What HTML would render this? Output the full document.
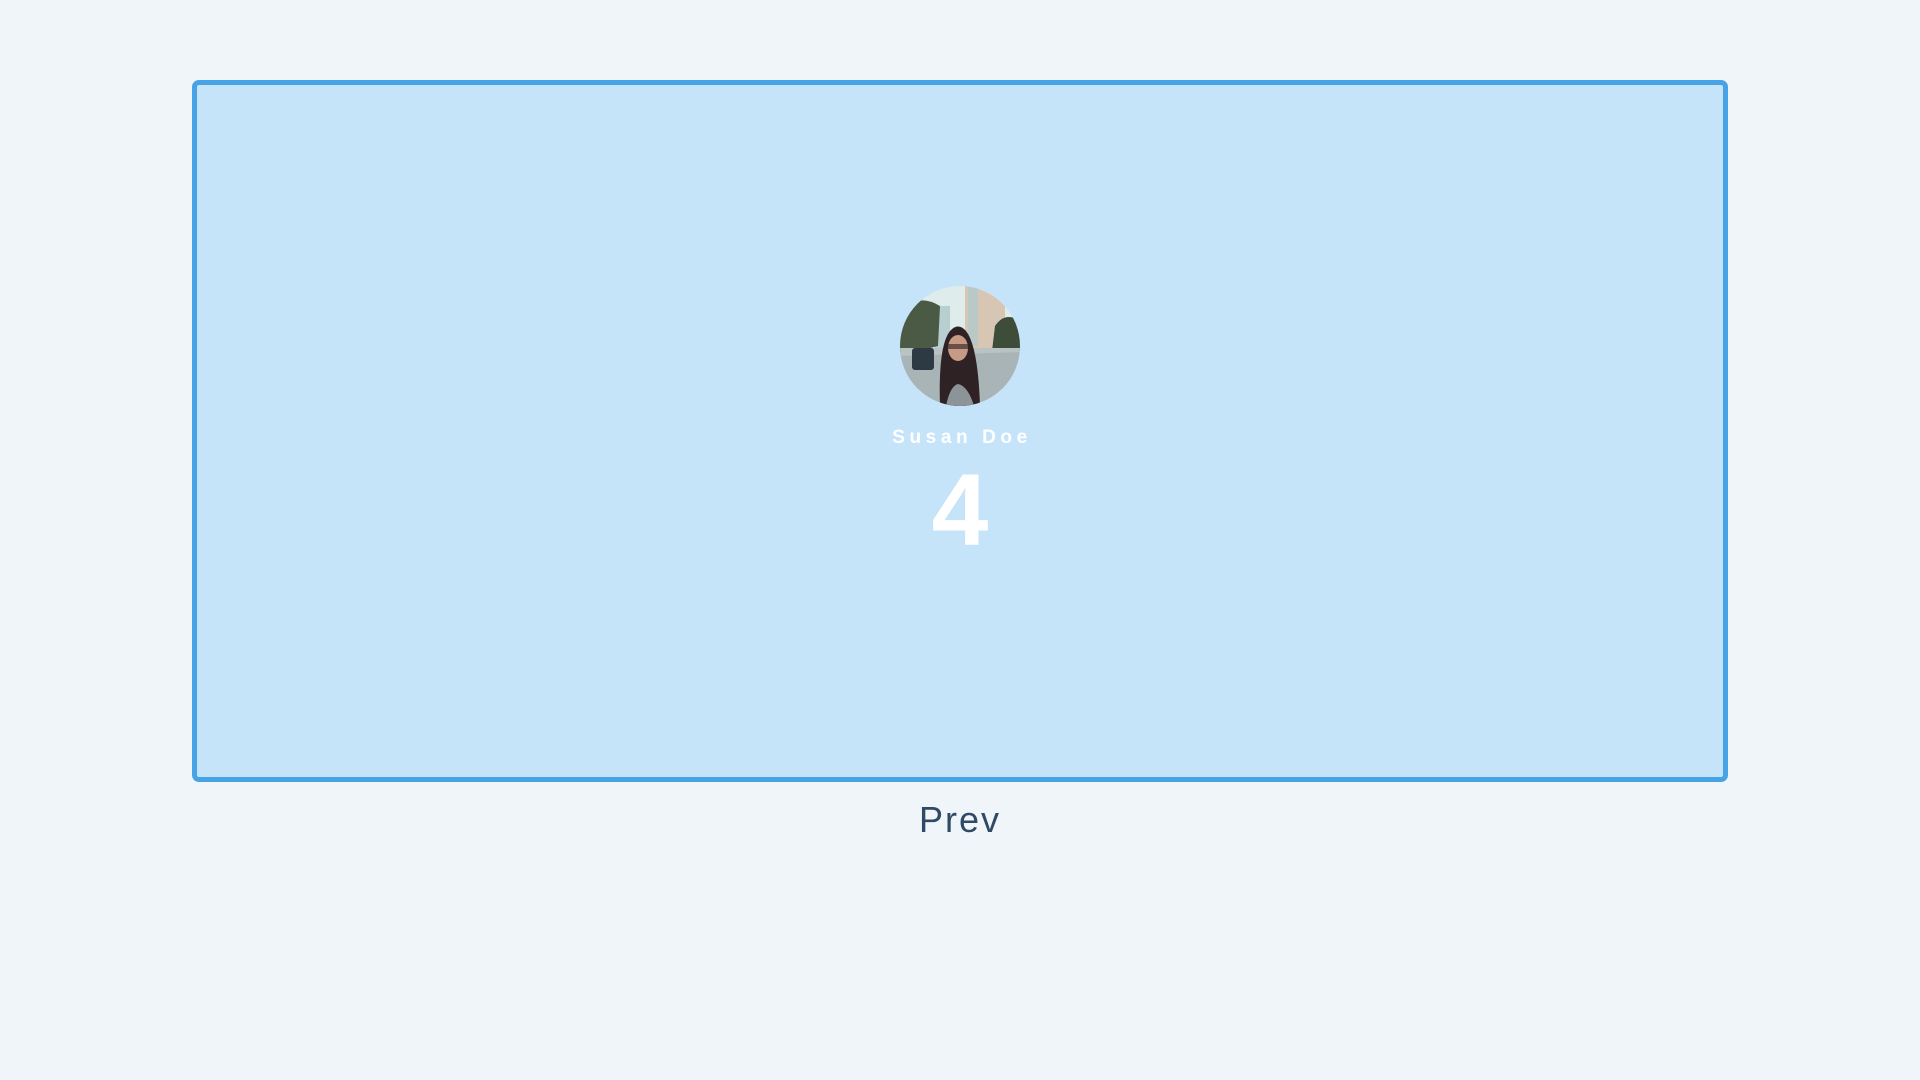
<!DOCTYPE html>
<html><head><meta charset="utf-8"><style>
html,body{margin:0;padding:0;width:1920px;height:1080px;background:#f0f5f9;overflow:hidden;font-family:"Liberation Sans",sans-serif}
.box{position:absolute;left:192px;top:80px;width:1526px;height:692px;border:5px solid #45a3e6;border-radius:7px;background:#c5e4fa}
.av{position:absolute;left:900px;top:286px;width:120px;height:120px;border-radius:50%;overflow:hidden}
.name{position:absolute;left:0;width:1920px;top:427px;text-align:center;color:#fff;font-weight:bold;font-size:19px;letter-spacing:4.6px;text-indent:4px}
.num{position:absolute;left:0;width:1920px;top:455px;text-align:center;color:#fff;font-weight:bold;font-size:102px;line-height:110px}
.prev{position:absolute;left:0;width:1920px;top:798px;text-align:center;color:#2f4a66;font-size:36px;letter-spacing:2px;line-height:44px}
</style></head><body>
<div class="box"></div>
<div class="av"><svg width="120" height="120" viewBox="0 0 120 120">
<rect width="120" height="120" fill="#dfecec"/>
<rect x="65" y="0" width="40" height="70" fill="#d8c6b4"/>
<rect x="68" y="0" width="10" height="60" fill="#b9c9c6"/>
<rect x="35" y="20" width="15" height="45" fill="#b8cfd2"/>
<path d="M0 30 Q15 5 40 20 L38 60 L0 70Z" fill="#4a5a44"/>
<path d="M95 40 Q105 25 120 35 L120 65 L92 65Z" fill="#3e4c3a"/>
<rect x="0" y="62" width="120" height="58" fill="#b9c3c4"/>
<path d="M0 70 L120 66 L120 120 L0 120Z" fill="#a9b4b7"/>
<rect x="12" y="62" width="22" height="22" rx="3" fill="#2d3a44"/>
<path d="M40 120 Q38 60 50 45 Q58 36 66 45 Q78 60 80 120Z" fill="#2e2225"/>
<ellipse cx="58" cy="62" rx="10" ry="13" fill="#c69a84"/>
<rect x="48" y="58" width="20" height="5" fill="#2a1f1f" opacity=".6"/>
<path d="M46 120 Q50 100 58 98 Q68 100 74 120Z" fill="#8c9498"/>
</svg></div>
<div class="name">Susan Doe</div>
<div class="num">4</div>
<div class="prev">Prev</div>
</body></html>
